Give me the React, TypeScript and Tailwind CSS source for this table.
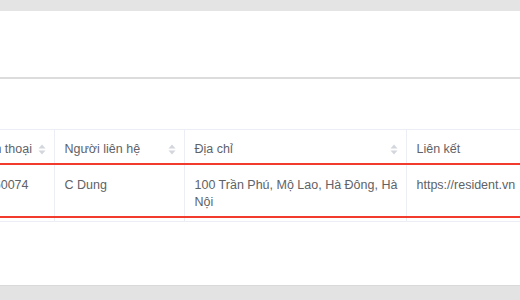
import React from "react";

function SortIcon() {
  return (
    <svg width="8" height="11" viewBox="0 0 8 11" className="shrink-0">
      <path d="M4 0.5 L7.5 4.5 L0.5 4.5 Z" fill="#d3d6dc" />
      <path d="M4 10.5 L7.5 6.5 L0.5 6.5 Z" fill="#d3d6dc" />
    </svg>
  );
}

const columns = [
  { title: "Số điện thoại", width: "w-[105px]", sort: true },
  { title: "Người liên hệ", width: "w-[130px]", sort: true },
  { title: "Địa chỉ", width: "w-[222px]", sort: true },
  { title: "Liên kết", width: "w-[180px]", sort: false },
];

const row = ["0912360074", "C Dung", "100 Trần Phú, Mộ Lao, Hà Đông, Hà Nội", "https://resident.vn"];

export default function App() {
  return (
    <div className="w-[520px] h-[300px] bg-white flex flex-col overflow-hidden font-['Liberation_Sans',Arial,sans-serif] text-[12.5px]">
      <div className="h-[11px] bg-[#e4e4e4] shrink-0" />
      <div className="h-[68px] border-b-2 border-[#dcdcdc] shrink-0" />
      <div className="h-[50px] shrink-0" />

      <div className="relative ml-[-51px] border-t border-[#ebeef5]">
        <table className="border-collapse table-fixed w-[637px]">
          <thead>
            <tr className="h-[34px]">
              {columns.map((c, i) => (
                <th
                  key={i}
                  className={`${c.width} p-0 font-normal text-left text-[#5f6268] border-r border-[#ebeef5]`}
                >
                  <div className="flex items-center justify-between pl-[10px] pr-[8px] pt-[4px]">
                    <span>{c.title}</span>
                    {c.sort && <SortIcon />}
                  </div>
                </th>
              ))}
            </tr>
          </thead>
          <tbody>
            <tr className="h-[57px] align-top">
              {row.map((v, i) => (
                <td
                  key={i}
                  className="pt-[13px] pl-[10px] pr-[4px] pb-0 text-[#606266] leading-[17px] border-r border-b border-[#ebeef5]"
                >
                  {v}
                </td>
              ))}
            </tr>
          </tbody>
        </table>
        <div className="absolute left-0 right-0 top-[33px] h-[55px] border-y-2 border-[#f23b2c] pointer-events-none" />
      </div>

      <div className="flex-1" />
      <div className="h-[15px] bg-[#e3e3e3] border-t border-[#d9d9d9] shrink-0" />
    </div>
  );
}
